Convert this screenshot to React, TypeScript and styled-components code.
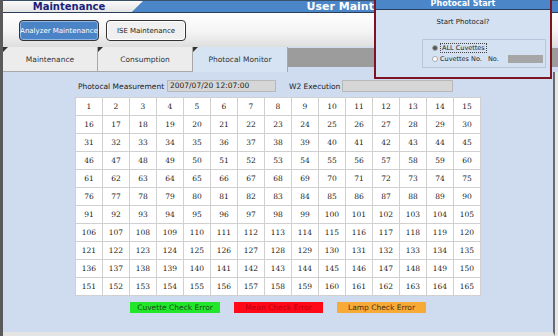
import React from 'react';
import styled, { createGlobalStyle } from 'styled-components';

const GlobalStyle = createGlobalStyle`
  html, body {
    margin: 0;
    padding: 0;
    background: #e6e6e6;
  }
  body {
    font-family: Tahoma, "DejaVu Sans", "Liberation Sans", sans-serif;
  }
`;

const Screen = styled.div`
  position: relative;
  width: 558px;
  height: 336px;
  overflow: hidden;
  display: flex;
  flex-direction: column;
  background: #e6e6e6;
  border-left: 3px solid #5a5a5a;
  box-sizing: border-box;
`;

const TitleBar = styled.div`
  display: flex;
  height: 13px;
  background: #4a86c8;
  border-top: 1px solid #3a4f6a;
  border-bottom: 1px solid #2a3d5a;
  box-sizing: border-box;
`;

const ScreenTab = styled.div`
  width: 140px;
  flex: none;
  display: flex;
  align-items: center;
  justify-content: center;
  padding-right: 8px;
  box-sizing: border-box;
  background: linear-gradient(#fafafa, #e4e4e4);
  clip-path: polygon(0 0, 100% 0, 92% 100%, 0 100%);
  color: #1b1f7a;
  font-weight: bold;
  font-size: 10px;
`;

const ScreenTitle = styled.div`
  flex: 1;
  display: flex;
  align-items: center;
  justify-content: center;
  padding-left: 24px;
  color: #ffffff;
  font-weight: bold;
  font-size: 11px;
`;

const ButtonRow = styled.div`
  height: 34px;
  display: flex;
  align-items: center;
  gap: 7px;
  padding: 0 0 0 16px;
  background: linear-gradient(#ffffff, #f4f4f4 55%, #dedede);
`;

const ModeButton = styled.div<{ $active?: boolean }>`
  width: 80px;
  height: 21px;
  display: flex;
  align-items: center;
  justify-content: center;
  box-sizing: border-box;
  border: 1px solid #333;
  border-radius: 4px;
  box-shadow: inset 0 0 0 1px ${(p) => (p.$active ? '#8fb6e4' : '#ffffff')};
  background: ${(p) => (p.$active ? '#4a84c6' : '#f0f0f0')};
  color: ${(p) => (p.$active ? '#ffffff' : '#222')};
  font-size: 7px;
  margin-top: 1px;
`;

const TabRow = styled.div`
  height: 25px;
  display: flex;
  background: #cfdcf0;
`;

const Tab = styled.div<{ $active?: boolean }>`
  position: relative;
  width: 95px;
  display: flex;
  align-items: center;
  justify-content: center;
  box-sizing: border-box;
  border-right: 1px solid #a8a8a8;
  border-bottom: ${(p) => (p.$active ? 'none' : '1px solid #a8a8a8')};
  background: ${(p) => (p.$active ? '#d6e3f3' : '#ececec')};
  color: #333;
  font-size: 7.5px;

  &::before {
    content: '';
    position: absolute;
    left: 0;
    top: 0;
    border-top: 5px solid #333;
    border-right: 5px solid transparent;
  }
`;

const TabFiller = styled.div`
  flex: 1;
  height: 19px;
  background: #9c9c9c;
  margin-top: 1px;
`;

const Content = styled.div`
  flex: 1;
  display: flex;
  flex-direction: column;
  padding: 7px 0 0 72px;
  margin-right: 3px;
  background: #cfdcf0;
  border-right: 2px solid #6a6a6a;
  border-bottom: 4px solid #e4e4e4;
`;

const MeasureRow = styled.div`
  display: flex;
  align-items: center;
  height: 14px;
  padding-left: 3px;
  font-size: 7.5px;
  color: #222;
`;

const Label = styled.span<{ $w: number }>`
  width: ${(p) => p.$w}px;
  flex: none;
`;

const Field = styled.div<{ $w: number }>`
  width: ${(p) => p.$w}px;
  height: 12px;
  box-sizing: border-box;
  border: 1px solid #b8b8b8;
  background: #d6d6d6;
  font-size: 7.5px;
  line-height: 10px;
  padding-left: 2px;
  margin-right: 13px;
`;

const Grid = styled.div`
  margin-top: 4px;
  display: grid;
  grid-template-columns: repeat(15, 27px);
  grid-auto-rows: 18px;
  width: 405px;
  background: #fff;
  border-top: 1px solid #d0d0d0;
  border-left: 1px solid #d0d0d0;
  box-sizing: content-box;
`;

const Cell = styled.div`
  display: flex;
  align-items: center;
  justify-content: center;
  border-right: 1px solid #d0d0d0;
  border-bottom: 1px solid #d0d0d0;
  font-family: "DejaVu Serif", "Liberation Serif", serif;
  font-size: 7.5px;
  color: #222;
`;

const Legend = styled.div`
  display: flex;
  margin-top: 6px;
  padding-left: 55px;
  gap: 14px;
`;

const LegendItem = styled.div<{ $bg: string; $fg: string; $w: number }>`
  width: ${(p) => p.$w}px;
  height: 11px;
  display: flex;
  align-items: center;
  justify-content: center;
  background: ${(p) => p.$bg};
  color: ${(p) => p.$fg};
  font-size: 7.5px;
`;

const Dialog = styled.div`
  position: absolute;
  left: 371px;
  top: 0;
  width: 178px;
  height: 79px;
  box-sizing: border-box;
  border: 2px solid #7c1424;
  border-top: none;
  background: #d3e1f3;
  display: flex;
  flex-direction: column;
`;

const DialogTitle = styled.div`
  height: 9px;
  background: #4a86c8;
  border-bottom: 1px solid #2a3d5a;
  color: #fff;
  font-weight: bold;
  font-size: 8px;
  line-height: 8px;
  text-align: center;
`;

const Question = styled.div`
  text-align: center;
  font-size: 7px;
  color: #222;
  margin-top: 8px;
`;

const OptionBox = styled.div`
  margin: 13px 4px 0 46px;
  height: 29px;
  box-sizing: border-box;
  border: 1px solid #b6c6dc;
  display: flex;
  flex-direction: column;
  justify-content: center;
  gap: 2px;
  padding-left: 9px;
  font-size: 6.5px;
  color: #222;
`;

const Option = styled.div`
  display: flex;
  align-items: center;
  height: 9px;
`;

const Radio = styled.span<{ $on?: boolean }>`
  width: 4px;
  height: 4px;
  border-radius: 50%;
  border: 1px solid #aaa;
  background: ${(p) => (p.$on ? '#555' : '#fff')};
  margin-right: 2px;
`;

const Focus = styled.span`
  border: 1px dotted #444;
  padding: 0 1px;
`;

const OptionText = styled.span`
  width: 48px;
`;

const SmallField = styled.div`
  width: 35px;
  height: 8px;
  background: #a6a6a6;
  margin-left: 9px;
`;

const legend = [
  { text: 'Cuvette Check Error', bg: '#22e62a', fg: '#1a4a1a', w: 90 },
  { text: 'Mean Check Error', bg: '#ff0818', fg: '#b80010', w: 89 },
  { text: 'Lamp Check Error', bg: '#f8aa36', fg: '#4a3010', w: 89 },
];

export default function App() {
  const cells = Array.from({ length: 165 }, (_, i) => i + 1);
  return (
    <>
      <GlobalStyle />
      <Screen>
        <TitleBar>
          <ScreenTab>Maintenance</ScreenTab>
          <ScreenTitle>User Maintenance</ScreenTitle>
        </TitleBar>
        <ButtonRow>
          <ModeButton $active>Analyzer Maintenance</ModeButton>
          <ModeButton>ISE Maintenance</ModeButton>
        </ButtonRow>
        <TabRow>
          <Tab>Maintenance</Tab>
          <Tab>Consumption</Tab>
          <Tab $active>Photocal Monitor</Tab>
          <TabFiller />
        </TabRow>
        <Content>
          <MeasureRow>
            <Label $w={89}>Photocal Measurement</Label>
            <Field $w={109}>2007/07/20 12:07:00</Field>
            <Label $w={53}>W2 Execution</Label>
            <Field $w={111} />
          </MeasureRow>
          <Grid>
            {cells.map((n) => (
              <Cell key={n}>{n}</Cell>
            ))}
          </Grid>
          <Legend>
            {legend.map((l) => (
              <LegendItem key={l.text} $bg={l.bg} $fg={l.fg} $w={l.w}>
                {l.text}
              </LegendItem>
            ))}
          </Legend>
        </Content>
        <Dialog>
          <DialogTitle>Photocal Start</DialogTitle>
          <Question>Start Photocal?</Question>
          <OptionBox>
            <Option>
              <Radio $on />
              <Focus>ALL Cuvettes</Focus>
            </Option>
            <Option>
              <Radio />
              <OptionText>Cuvettes No.</OptionText>
              <span>No.</span>
              <SmallField />
            </Option>
          </OptionBox>
        </Dialog>
      </Screen>
    </>
  );
}
